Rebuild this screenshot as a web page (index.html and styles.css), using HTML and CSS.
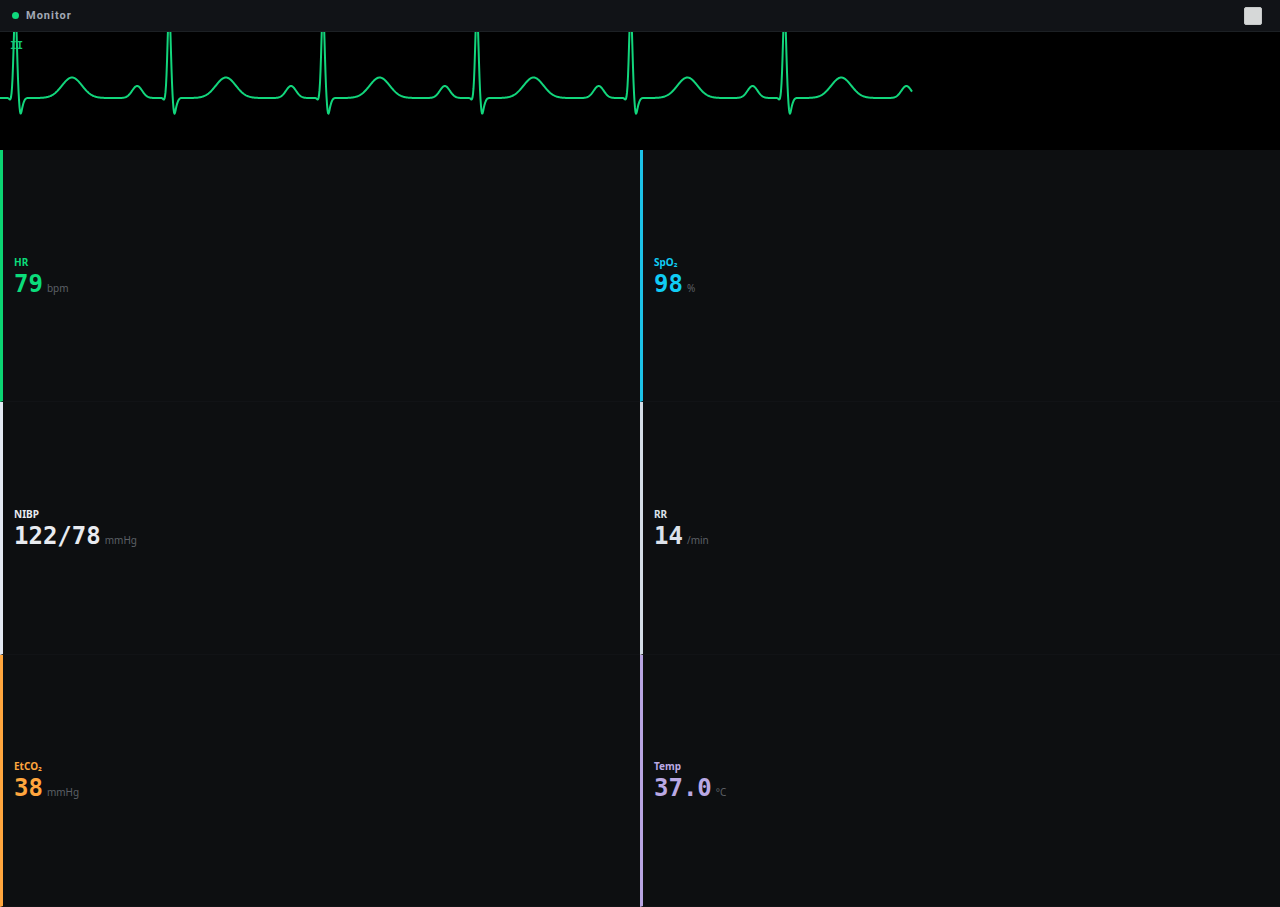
FILE: index.html
```html
<!DOCTYPE html>
<html lang="en">
	<head>
		<meta charset="UTF-8">
		<meta name="viewport" content="width=device-width, initial-scale=1">
		<title>Monitor</title>
		<link rel="stylesheet" href="styles.css">
	</head>
	<body>
		<header class="topbar">
			<span class="dot"></span>
			<h1 class="title">Monitor</h1>
			<button type="button" class="toggle" aria-label="Toggle monitor"></button>
		</header>
		<section class="ecg">
			<span class="lead">II</span>
			<svg class="wave" id="wave" aria-hidden="true"><path id="trace"></path></svg>
		</section>
		<main class="vitals">
			<section class="vital hr">
				<h2 class="name">HR</h2>
				<p class="reading"><span class="value">79</span><span class="unit">bpm</span></p>
			</section>
			<section class="vital spo2">
				<h2 class="name">SpO₂</h2>
				<p class="reading"><span class="value">98</span><span class="unit">%</span></p>
			</section>
			<section class="vital nibp">
				<h2 class="name">NIBP</h2>
				<p class="reading"><span class="value">122/78</span><span class="unit">mmHg</span></p>
			</section>
			<section class="vital rr">
				<h2 class="name">RR</h2>
				<p class="reading"><span class="value">14</span><span class="unit">/min</span></p>
			</section>
			<section class="vital etco2">
				<h2 class="name">EtCO₂</h2>
				<p class="reading"><span class="value">38</span><span class="unit">mmHg</span></p>
			</section>
			<section class="vital temp">
				<h2 class="name">Temp</h2>
				<p class="reading"><span class="value">37.0</span><span class="unit">°C</span></p>
			</section>
		</main>
		<script src="wave.js"></script>
	</body>
</html>
```

FILE: styles.css
```css
* {
	box-sizing: border-box;
	margin: 0;
}
body {
	display: flex;
	flex-direction: column;
	min-height: 100vh;
	background-color: #000;
	font-family: "Noto Sans", "Open Sans", sans-serif;
}

/* top bar */
.topbar {
	display: flex;
	align-items: center;
	gap: 7px;
	height: 32px;
	padding: 0 18px 0 12px;
	background-color: #111317;
	border-bottom: 1px solid #1c2024;
}
.dot {
	width: 7px;
	height: 7px;
	border-radius: 50%;
	background-color: #0fd87c;
}
.title {
	font-family: Roboto, sans-serif;
	font-size: 11px;
	font-weight: bold;
	line-height: 16px;
	letter-spacing: 1px;
	color: #a2a8b4;
}
.toggle {
	width: 18px;
	height: 18px;
	margin-left: auto;
	padding: 0;
	border: 1px solid #c6c9c9;
	border-radius: 2px;
	background-color: #d6d8d8;
	cursor: pointer;
}

/* ecg strip */
.ecg {
	position: relative;
	height: 118px;
	background-color: #000;
}
.lead {
	position: absolute;
	top: 7px;
	left: 10px;
	font-family: "DejaVu Sans Mono", monospace;
	font-size: 11px;
	font-weight: bold;
	line-height: 14px;
	color: #14c878;
}
.wave {
	display: block;
	width: 100%;
	height: 100%;
	overflow: hidden;
}
.wave path {
	fill: none;
	stroke: #12d67c;
	stroke-width: 2;
	stroke-linejoin: round;
}

/* vitals */
.vitals {
	flex: 1;
	display: grid;
	grid-template-columns: 1fr 1fr;
	grid-auto-rows: 1fr;
}
.vital {
	display: flex;
	flex-direction: column;
	justify-content: center;
	padding: 8px 11px 6px;
	background-color: #0d0f11;
	border-left: 3px solid;
	border-bottom: 1px solid #111316;
}
.name {
	font-size: 10px;
	font-weight: bold;
	line-height: 14px;
}
.reading {
	display: flex;
	align-items: baseline;
	gap: 4px;
}
.value {
	font-family: "DejaVu Sans Mono", monospace;
	font-size: 24px;
	font-weight: bold;
	line-height: 30px;
}
.unit {
	font-size: 10px;
	color: #5c6066;
}
.hr {
	color: #0bdc7a;
	border-left-color: #0bd573;
}
.spo2 {
	color: #10ccf4;
	border-left-color: #1cc2e8;
}
.nibp {
	color: #e8ebf0;
	border-left-color: #e2e8f2;
}
.rr {
	color: #dce2ea;
	border-left-color: #d4dce6;
}
.etco2 {
	color: #ffa63e;
	border-left-color: #ffa63e;
}
.temp {
	color: #baa9e4;
	border-left-color: #b8a5e2;
}
```

FILE: wave.js
```javascript
// offset from the R peak, height and width (px) of each wave in a beat
var waves = [
	[-32, 12, 5],
	[-5, -2, 1],
	[0, 90, 1.6],
	[5, -11, 1.2],
	[6.6, -7, 1.8],
	[56.7, 20.5, 10]
];
var firstBeat = 15.3;
var period = 153.85;
var baseline = 66;
var swept = 0.7125;

function level(x){
	var sum = 0;
	var first = Math.floor((x - firstBeat) / period);
	for(var n = first - 1; n <= first + 2; n++){
		waves.forEach(function(w){
			var d = (x - firstBeat - n * period - w[0]) / w[2];
			sum += w[1] * Math.exp(-d * d / 2);
		});
	}
	return sum;
}
function draw(){
	var end = document.getElementById("wave").clientWidth * swept;
	var points = [];
	for(var x = 0; x <= end; x += 0.5){
		points.push(x + " " + (baseline - level(x)).toFixed(2));
	}
	document.getElementById("trace").setAttribute("d", "M" + points.join("L"));
}
draw();
window.addEventListener("resize", draw);
```
